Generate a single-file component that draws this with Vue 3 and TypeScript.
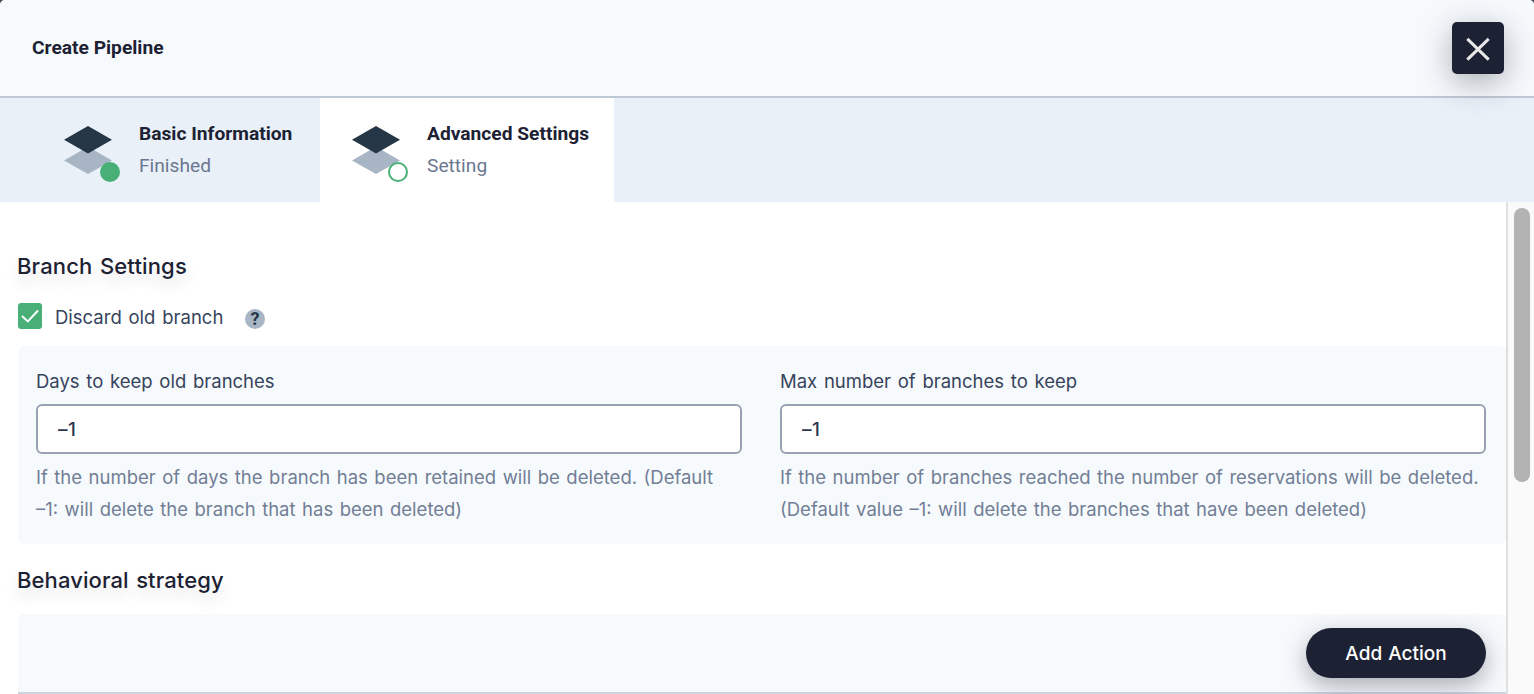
<script setup lang="ts">
import { ref } from 'vue'

interface Step {
  title: string
  status: string
  state: 'done' | 'active'
}

interface Field {
  id: string
  label: string
  help: string[]
}

const steps: Step[] = [
  { title: 'Basic Information', status: 'Finished', state: 'done' },
  { title: 'Advanced Settings', status: 'Setting', state: 'active' },
]

const fields: Field[] = [
  {
    id: 'days',
    label: 'Days to keep old branches',
    help: [
      'If the number of days the branch has been retained will be deleted. (Default',
      '–1: will delete the branch that has been deleted)',
    ],
  },
  {
    id: 'max',
    label: 'Max number of branches to keep',
    help: [
      'If the number of branches reached the number of reservations will be deleted.',
      '(Default value –1: will delete the branches that have been deleted)',
    ],
  },
]

const values = ref<Record<string, string>>({ days: '–1', max: '–1' })
const discard = ref(true)
</script>

<template>
  <div class="backdrop">
    <div class="modal">
      <header class="header">
        <h1 class="title">Create Pipeline</h1>
        <button class="close" type="button" aria-label="Close">
          <svg width="52" height="52" viewBox="0 0 52 52">
            <path d="M15.3 16.8 36.7 37.6M36.7 16.8 15.3 37.6" fill="none" stroke="#e8e8e8" stroke-width="3" />
          </svg>
        </button>
      </header>

      <nav class="steps">
        <div v-for="step in steps" :key="step.title" class="step" :class="step.state">
          <svg class="step-icon" width="56" height="56" viewBox="0 0 56 56">
            <path d="M24 20.8 48 34.6 24 48 0 34.6Z" fill="#a8b5c4" />
            <path d="M24 0 48 13.7 24 27.4 0 13.7Z" fill="#253646" />
            <circle v-if="step.state === 'done'" cx="46" cy="46" r="10" fill="#48b077" />
            <circle v-else cx="46" cy="46" r="9" fill="#fff" stroke="#48b077" stroke-width="2" />
          </svg>
          <div class="step-text">
            <div class="step-title">{{ step.title }}</div>
            <div class="step-status">{{ step.status }}</div>
          </div>
        </div>
      </nav>

      <div class="body">
        <main class="content">
          <h2 class="section first">Branch Settings</h2>
          <div class="check-row">
            <button class="checkbox" type="button" role="checkbox" :aria-checked="discard" @click="discard = !discard">
              <svg width="24" height="26" viewBox="0 0 24 26">
                <path v-if="discard" d="M4 13 9.8 18.4 20 7.5" fill="none" stroke="#fff" stroke-width="2" />
              </svg>
            </button>
            <span class="check-label">Discard old branch</span>
            <span class="hint">?</span>
          </div>

          <div class="panel fields">
            <div v-for="f in fields" :key="f.id" class="field">
              <label class="label" :for="f.id">{{ f.label }}</label>
              <input :id="f.id" v-model="values[f.id]" class="input" type="text" />
              <div class="help">
                <div v-for="line in f.help" :key="line">{{ line }}</div>
              </div>
            </div>
          </div>

          <h2 class="section second">Behavioral strategy</h2>
          <div class="panel actions">
            <button class="add" type="button">Add Action</button>
          </div>
        </main>
        <div class="track"><div class="thumb"></div></div>
      </div>
    </div>
  </div>
</template>

<style>
body {
  margin: 0;
  overflow: hidden;
}
</style>

<style scoped>
* {
  box-sizing: border-box;
}
.backdrop {
  width: 1534px;
  height: 694px;
  background: #404654;
  font-family: Inter, "Liberation Sans", sans-serif;
  color: #36435c;
}
.modal {
  height: 694px;
  display: flex;
  flex-direction: column;
  overflow: hidden;
  border-radius: 5px 5px 0 0;
  background: #fff;
}
.header {
  flex: none;
  height: 98px;
  display: flex;
  justify-content: space-between;
  padding: 22px 30px 0 32px;
  background: #f7fafd;
  border-bottom: 2px solid #bfc9d6;
}
.title {
  margin: 0;
  font: 700 19.2px/52px Roboto, sans-serif;
  color: #1c2233;
}
.close {
  width: 52px;
  height: 52px;
  padding: 0;
  border: 0;
  border-radius: 5px;
  background: #1c2233;
  box-shadow: 0 8px 32px rgba(28, 34, 51, 0.36);
  position: relative;
}
.close svg {
  display: block;
}
.steps {
  flex: none;
  height: 104px;
  display: flex;
  background: #e9f0f8;
}
.step {
  display: flex;
  padding: 28px 0 0 32px;
  width: 294px;
}
.step.done {
  width: 320px;
  padding-left: 64px;
}
.step.active {
  background: #fff;
}
.step-icon {
  flex: none;
}
.step-text {
  margin: -8px 0 0 19px;
  font-family: Roboto, sans-serif;
  font-size: 19.2px;
  line-height: 32px;
  white-space: nowrap;
}
.step-title {
  font-weight: 700;
  color: #1c2233;
}
.step-status {
  color: #6b7790;
}
.body {
  height: 492px;
  display: flex;
}
.content {
  flex: 1;
  padding-left: 18px;
}
.section {
  margin: 0 0 0 -1px;
  font-size: 22px;
  font-weight: 500;
  line-height: 32px;
  letter-spacing: 0.15px;
  word-spacing: 1.5px;
  color: #1c2233;
  text-shadow: 0 8px 16px rgba(28, 34, 51, 0.14);
}
.section.first {
  padding-top: 48px;
}
.section.second {
  padding-top: 20px;
  letter-spacing: 0.1px;
}
.check-row {
  display: flex;
  align-items: center;
  height: 26px;
  margin: 21px 0 17px;
  font-size: 18.5px;
  word-spacing: 1.6px;
}
.checkbox {
  width: 24px;
  height: 26px;
  padding: 0;
  border: 0;
  border-radius: 3px;
  background: #48b077;
}
.checkbox svg {
  display: block;
}
.check-label {
  margin: 2px 0 0 13px;
  width: 190px;
}
.hint {
  width: 20px;
  height: 20px;
  margin-top: 5px;
  border-radius: 50%;
  background: #a8b5c4;
  color: #253646;
  font: 700 18px/19px Roboto, sans-serif;
  text-align: center;
}
.panel {
  background: #f7fafd;
  border-radius: 6px;
}
.fields {
  display: flex;
  gap: 38px;
  height: 198px;
  padding: 19px 20px 0 18px;
}
.field {
  width: 706px;
  font-size: 18.5px;
  word-spacing: 1.5px;
}
.label {
  display: block;
  height: 39px;
  line-height: 32px;
}
.input {
  display: block;
  width: 706px;
  height: 50px;
  padding: 0 20px;
  border: 2px solid #98a2b3;
  border-radius: 6px;
  background: #fff;
  font: 500 19px Inter, sans-serif;
  letter-spacing: 0.4px;
  color: #2c3850;
  outline: none;
}
.help {
  margin-top: 7px;
  line-height: 32px;
  word-spacing: 1.3px;
  color: #717e95;
  white-space: nowrap;
}
.actions {
  display: flex;
  justify-content: flex-end;
  align-items: flex-start;
  height: 80px;
  margin-top: 18px;
  padding: 14px 20px 0 0;
  border-bottom: 2px solid #ccd4e0;
  border-radius: 6px 6px 0 0;
}
.add {
  width: 180px;
  height: 50px;
  padding: 0;
  border: 0;
  border-radius: 25px;
  background: #1c2233;
  box-shadow: 0 8px 24px rgba(28, 34, 51, 0.36);
  color: #fff;
  font: 500 19px Inter, sans-serif;
  word-spacing: 1px;
}
.track {
  flex: none;
  width: 28px;
  padding: 6px 4px 0 6px;
  background: #fafafa;
  border-left: 2px solid #e0e0e0;
  position: relative;
}
.thumb {
  width: 16px;
  height: 274px;
  border-radius: 8px;
  background: #b3b3b3;
}
</style>
